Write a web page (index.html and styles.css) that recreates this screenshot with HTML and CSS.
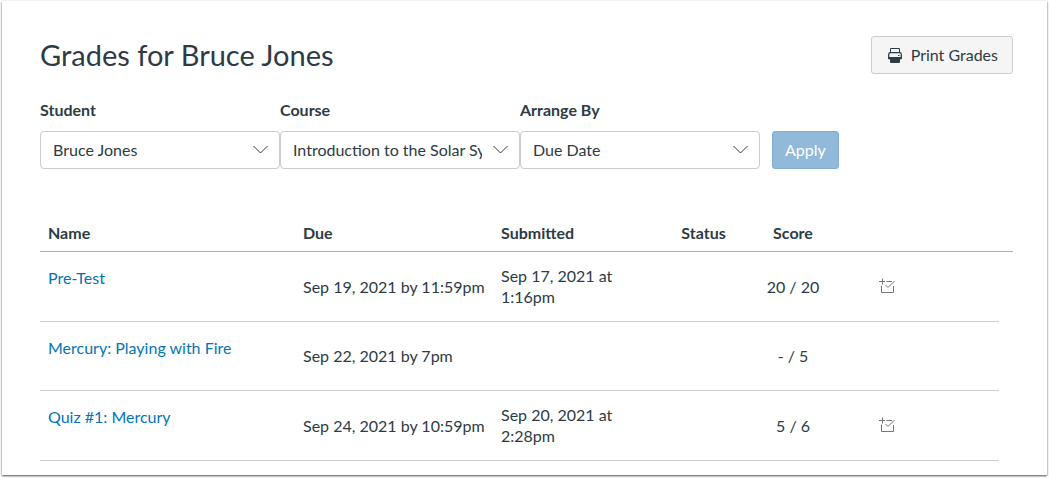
FILE: index.html
```html
<!doctype html>
<html lang="en">
<head>
<meta charset="utf-8">
<title>Grades for Bruce Jones</title>
<link rel="stylesheet" href="styles.css">
</head>
<body>
<main class="panel">
  <header class="page-header">
    <h1 class="page-title">Grades for Bruce Jones</h1>
    <button type="button" class="btn btn-print">
      <svg class="print-icon" width="14" height="16" viewBox="0 0 14 16" aria-hidden="true">
        <path d="M2.500 6V1.500H11.500V6" fill="none" stroke="#2d3b45"/>
        <path d="M2.500 11.500H.7V7.500Q.7 5.700 2.400 5.700H11.600Q13.300 5.700 13.300 7.500V11.500H11.500" fill="none" stroke="#2d3b45" stroke-width="1.300"/>
        <path d="M2 10.500H12V15Q12 16 11 16H3Q2 16 2 15Z" fill="#2d3b45"/>
        <path d="M1 10.500H13M10 8.500H11.500" stroke="#2d3b45"/>
      </svg>
      Print Grades
    </button>
  </header>

  <form class="filters">
    <div class="field">
      <label class="field-label" for="student">Student</label>
      <div class="select-wrap">
        <select class="select" id="student"><option>Bruce Jones</option></select>
        <svg class="chevron" width="16" height="10" viewBox="0 0 16 10" aria-hidden="true"><path d="M1.500 1L8.500 8L15.500 1"/></svg>
      </div>
    </div>
    <div class="field">
      <label class="field-label" for="course">Course</label>
      <div class="select-wrap">
        <select class="select" id="course"><option>Introduction to the Solar System</option></select>
        <svg class="chevron" width="16" height="10" viewBox="0 0 16 10" aria-hidden="true"><path d="M1.500 1L8.500 8L15.500 1"/></svg>
      </div>
    </div>
    <div class="field">
      <label class="field-label" for="arrange">Arrange By</label>
      <div class="select-wrap">
        <select class="select" id="arrange"><option>Due Date</option></select>
        <svg class="chevron" width="16" height="10" viewBox="0 0 16 10" aria-hidden="true"><path d="M1.500 1L8.500 8L15.500 1"/></svg>
      </div>
    </div>
    <button type="button" class="btn btn-apply" disabled>Apply</button>
  </form>

  <table class="grades">
    <colgroup>
      <col>
      <col class="col-due">
      <col class="col-submitted">
      <col class="col-status">
      <col class="col-score">
      <col class="col-details">
      <col class="col-end">
    </colgroup>
    <thead>
      <tr>
        <th>Name</th>
        <th>Due</th>
        <th>Submitted</th>
        <th class="center">Status</th>
        <th class="center">Score</th>
        <th></th>
        <th></th>
      </tr>
    </thead>
    <tbody>
      <tr>
        <th class="name" scope="row"><a href="#">Pre-Test</a></th>
        <td>Sep 19, 2021 by 11:59pm</td>
        <td>Sep 17, 2021 at 1:16pm</td>
        <td></td>
        <td class="center">20 / 20</td>
        <td class="details">
          <a href="#" aria-label="Scoring details"><svg class="check-icon" width="16" height="16" viewBox="0 0 16 16" aria-hidden="true"><path d="M0 3.500H6M3.500 .5V6.500M7.500 3.500H13M2.500 7.500V14.500H14.500V8M6.500 7L9 9.500L15.500 3"/></svg></a>
        </td>
      </tr>
      <tr>
        <th class="name" scope="row"><a href="#">Mercury: Playing with Fire</a></th>
        <td>Sep 22, 2021 by 7pm</td>
        <td></td>
        <td></td>
        <td class="center">- / 5</td>
        <td></td>
      </tr>
      <tr>
        <th class="name" scope="row"><a href="#">Quiz #1: Mercury</a></th>
        <td>Sep 24, 2021 by 10:59pm</td>
        <td>Sep 20, 2021 at 2:28pm</td>
        <td></td>
        <td class="center">5 / 6</td>
        <td class="details">
          <a href="#" aria-label="Scoring details"><svg class="check-icon" width="16" height="16" viewBox="0 0 16 16" aria-hidden="true"><path d="M0 3.500H6M3.500 .5V6.500M7.500 3.500H13M2.500 7.500V14.500H14.500V8M6.500 7L9 9.500L15.500 3"/></svg></a>
        </td>
      </tr>
    </tbody>
  </table>
</main>
</body>
</html>
```
FILE: styles.css
```css
* {
  box-sizing: border-box;
}
body {
  margin: 0;
  padding: 1px 2px 3px;
  background: #fff;
  color: #2d3b45;
  font-family: Lato, "Liberation Sans", sans-serif;
  font-size: 16px;
  line-height: 21px;
}
.panel {
  padding: 35px 34px 14px 38px;
  background: #fff;
  box-shadow: 0 1px 2px rgba(0, 0, 0, 0.7);
}
.page-header {
  display: flex;
  justify-content: space-between;
  align-items: center;
}
.page-title {
  margin: 0;
  font-size: 29px;
  line-height: 38px;
  font-weight: normal;
}

/* buttons */
.btn {
  display: flex;
  align-items: center;
  justify-content: center;
  height: 38px;
  border: 1px solid #c7cdd1;
  border-radius: 3px;
  font-family: inherit;
  font-size: 16px;
}
.btn-print {
  gap: 9px;
  padding: 0 14px 2px 16px;
  background: #f5f5f5;
  color: #2d3b45;
}
.print-icon {
  margin-top: 2px;
}
.btn-apply {
  margin-left: 12px;
  padding: 0 12px 2px;
  border-color: #82acce;
  background: #90b9da;
  color: #fff;
}

/* filters */
.filters {
  display: flex;
  align-items: flex-end;
  margin-top: 25px;
}
.field {
  width: 240px;
}
.field-label {
  display: block;
  margin-bottom: 11px;
  font-weight: bold;
}
.select-wrap {
  position: relative;
}
.select {
  display: block;
  appearance: none;
  width: 100%;
  height: 38px;
  padding: 0 37px 2px 12px;
  border: 1px solid #c7cdd1;
  border-radius: 4px;
  background: #fff;
  color: #2d3b45;
  font-family: inherit;
  font-size: 16px;
}
.chevron {
  position: absolute;
  top: 14px;
  right: 12px;
  fill: none;
  stroke: #2d3b45;
  pointer-events: none;
}

/* grades table */
.grades {
  width: 100%;
  margin-top: 47px;
  table-layout: fixed;
  border-collapse: collapse;
}
.col-due {
  width: 198px;
}
.col-submitted {
  width: 169px;
}
.col-status {
  width: 83px;
}
.col-score {
  width: 96px;
}
.col-details {
  width: 158px;
}
.col-end {
  width: 14px;
}
.grades th,
.grades td {
  padding: 6px 8px 8px;
  text-align: left;
}
.grades thead th {
  border-bottom: 1px solid #aab3b9;
}
.grades tbody th,
.grades tbody td {
  height: 69px;
  padding-top: 13px;
  padding-bottom: 14px;
  border-bottom: 1px solid #c7cdd1;
}
.grades .name {
  padding-top: 15px;
  font-weight: normal;
  vertical-align: top;
}
.grades .center {
  text-align: center;
}
.grades .details {
  padding-left: 38px;
}
.name a {
  color: #0374b5;
  text-decoration: none;
}
.check-icon {
  display: block;
  fill: none;
  stroke: #73777a;
}
```
